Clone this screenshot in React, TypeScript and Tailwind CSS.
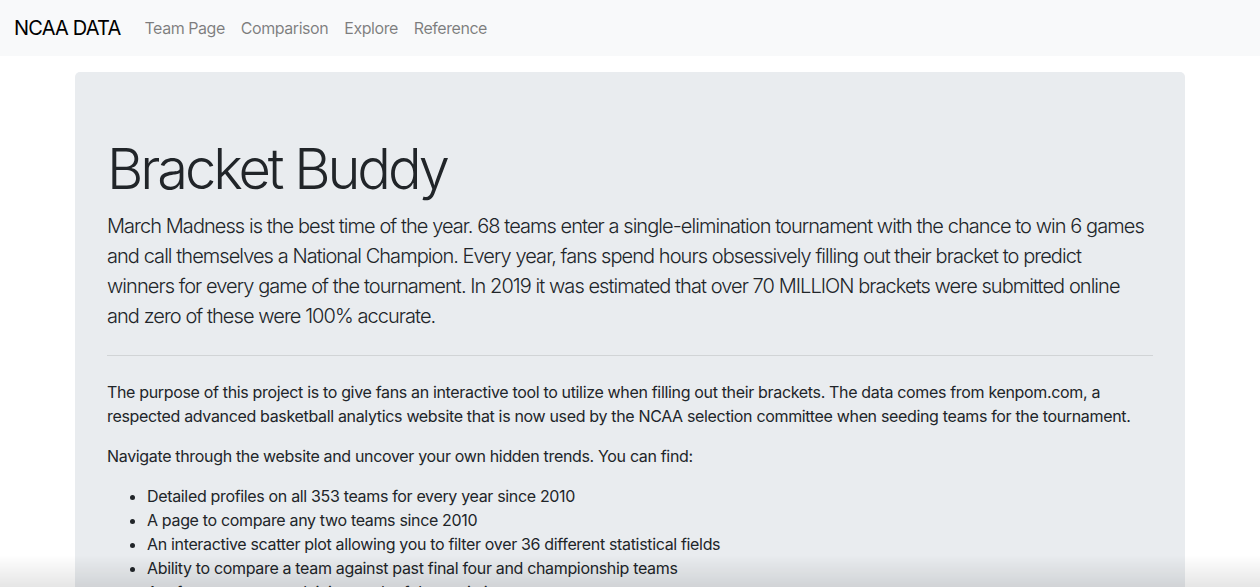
import React from "react";

const links = ["Team Page", "Comparison", "Explore", "Reference"];

const finds = [
  "Detailed profiles on all 353 teams for every year since 2010",
  "A page to compare any two teams since 2010",
  "An interactive scatter plot allowing you to filter over 36 different statistical fields",
  "Ability to compare a team against past final four and championship teams",
  "A reference page explaining each of the statistics",
];

const App: React.FC = () => {
  return (
    <div className="relative min-h-screen bg-white text-[#212529] font-['Inter','Liberation_Sans',sans-serif]">
      {/* Navbar */}
      <nav className="flex items-center h-14 pl-[14px] pr-4 bg-[#f8f9fa]">
        <span className="text-xl leading-[30px] mr-4 text-black tracking-[-0.04em]">NCAA DATA</span>
        <div className="flex">
          {links.map((l) => (
            <span key={l} className="px-2 text-base text-black/50 tracking-[-0.028em]">
              {l}
            </span>
          ))}
        </div>
      </nav>

      {/* Jumbotron */}
      <div className="w-[1140px] mx-auto px-[15px] mt-4">
        <div className="bg-[#e9ecef] rounded-[5px] px-8 py-16">
          <h1 className="text-[56px] font-light leading-[1.2] mb-2 tracking-[-0.055em]">Bracket Buddy</h1>
          <p className="text-xl font-light leading-[30px] mb-4 tracking-[-0.047em]">
            March Madness is the best time of the year. 68 teams enter a single-elimination tournament with the
            chance to win 6 games
            <br />
            and call themselves a National Champion. Every year, fans spend hours obsessively filling out their
            bracket to predict
            <br />
            winners for every game of the tournament. In 2019 it was estimated that over 70 MILLION brackets were
            submitted online
            <br />
            and zero of these were 100% accurate.
          </p>
          <hr className="my-6 border-t border-black/10" />
          <div className="tracking-[-0.021em]">
            <p className="text-base leading-6 mb-4">
              The purpose of this project is to give fans an interactive tool to utilize when filling out their
              brackets. The data comes from kenpom.com, a respected advanced basketball analytics website that is
              now used by the NCAA selection committee when seeding teams for the tournament.
            </p>
            <p className="text-base leading-6 mb-4">
              Navigate through the website and uncover your own hidden trends. You can find:
            </p>
            <ul className="list-disc pl-10 text-base leading-6">
              {finds.map((f) => (
                <li key={f}>{f}</li>
              ))}
            </ul>
          </div>
        </div>
      </div>

      {/* screenshot shadow at the bottom edge */}
      <div className="pointer-events-none fixed left-0 right-0 bottom-0 h-8 bg-gradient-to-b from-transparent to-black/10" />
    </div>
  );
};

export default App;
